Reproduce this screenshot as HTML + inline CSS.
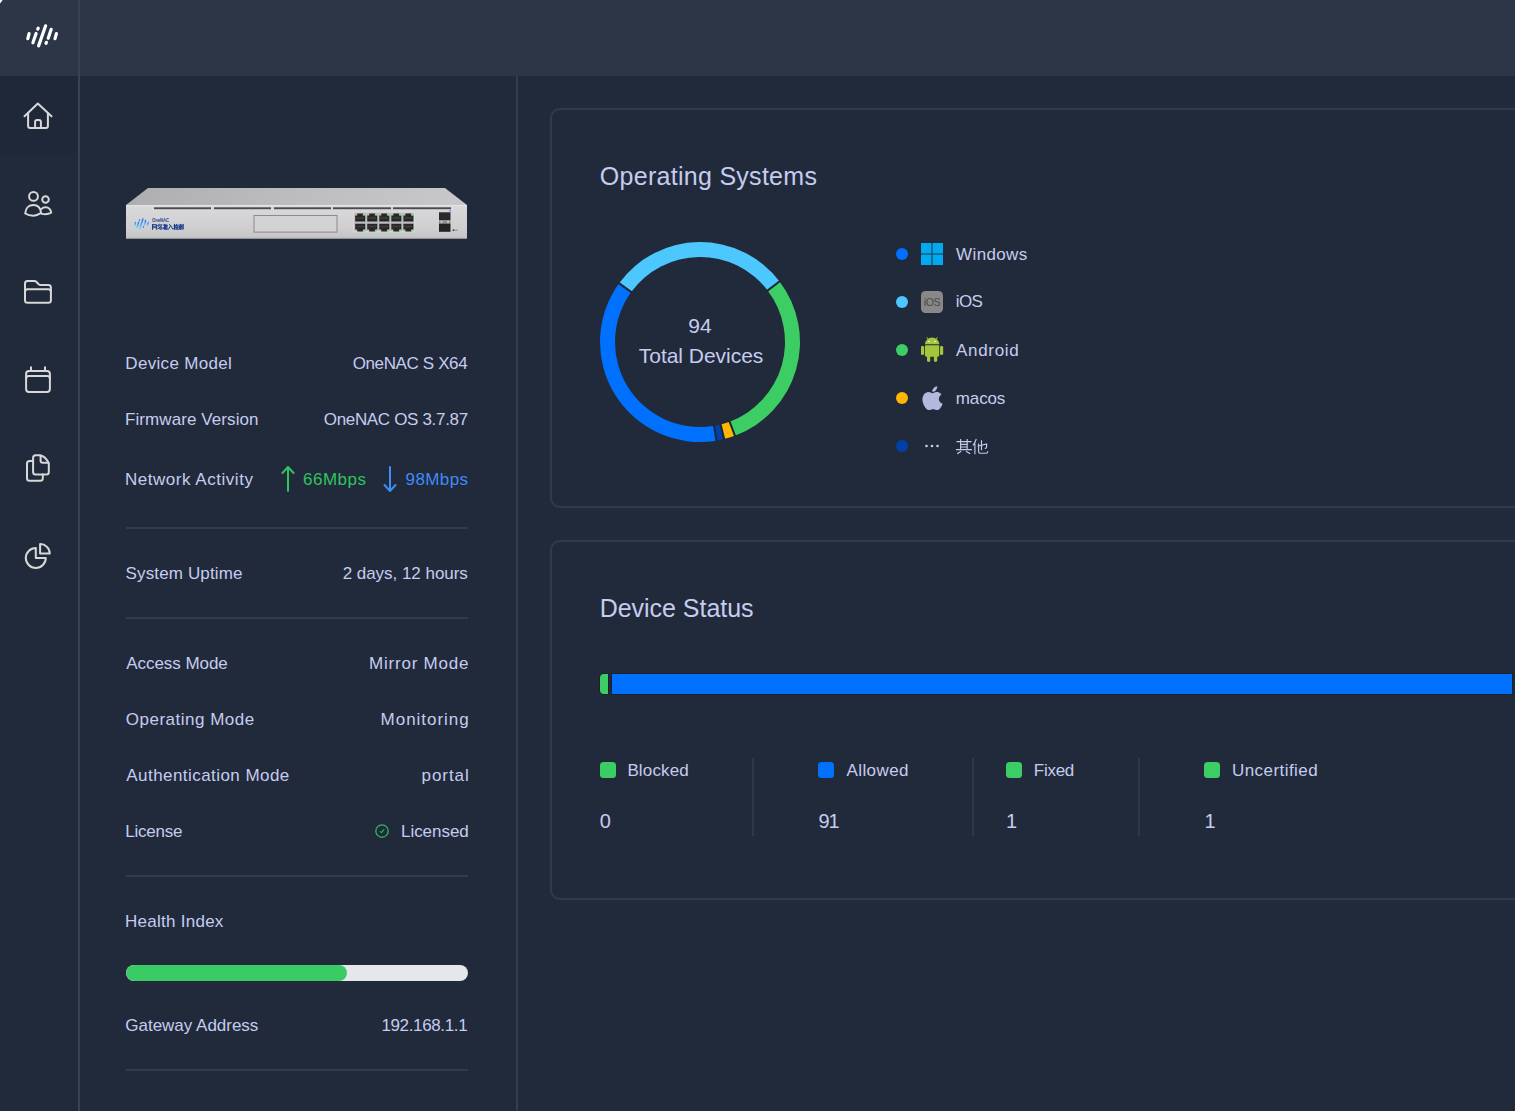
<!DOCTYPE html>
<html>
<head>
<meta charset="utf-8">
<style>
*{margin:0;padding:0;box-sizing:border-box}
html,body{width:1515px;height:1111px;overflow:hidden;background:#212a3b;font-family:"Liberation Sans",sans-serif;color:#c6ccee}
.abs{position:absolute}
.t{position:absolute;line-height:1;white-space:nowrap;font-size:17px}
.r{text-align:right}
#topbar{position:absolute;left:0;top:0;width:1515px;height:76px;background:#2d3647}
#sideline{position:absolute;left:78px;top:0;width:2px;height:1111px;background:#394152}
#panelline{position:absolute;left:516px;top:76px;width:2px;height:1035px;background:#343c4e}
.hr{position:absolute;left:126px;width:342px;height:2px;background:#343a4b}
.card{position:absolute;left:550px;width:1100px;border:2px solid #313a4a;border-radius:10px}
.ic{position:absolute;left:18px;width:40px;height:40px}
.ic path,.ic circle{fill:none;stroke:#d8d8d8;stroke-width:2;stroke-linecap:round;stroke-linejoin:round}
</style>
</head>
<body>
<div id="topbar"></div>
<div class="abs" style="left:0;top:76px;width:78px;height:79px;background:#1f2838;border-radius:0 0 8px 8px"></div>
<div id="sideline"></div>
<svg class="abs" style="left:0;top:0" width="6" height="6" viewBox="0 0 6 6"><path d="M0 0 H3.2 L0 4.3 Z" fill="#f4f4f4"/><path d="M3.2 0 L0 4.3" stroke="#1c2331" stroke-width="0.8"/></svg>
<div id="panelline"></div>

<!-- logo -->
<svg class="abs" style="left:22px;top:20px" width="40" height="32" viewBox="0 0 40 32">
<g stroke="#fff" stroke-width="3.2" stroke-linecap="round" fill="none">
<path d="M7.1 13.6 L5.8 18.6"/>
<path d="M14.1 13.4 L10.9 22.8"/>
<path d="M16.2 8.2 L15.8 9.2"/>
<path d="M23.6 5.8 L16.6 25.9"/>
<path d="M29.2 9.3 L26.2 18.3"/>
<path d="M24.4 22.3 L24 23.3"/>
<path d="M34.4 13.6 L33 18.6"/>
</g>
</svg>

<!-- sidebar icons -->
<svg class="ic" style="top:96px" viewBox="0 0 40 40">
<path d="M6.5 20.2 L19.8 7.6 L33.5 20.2"/>
<path d="M10.1 17.3 V30 Q10.1 32 12.1 32 H27.9 Q29.9 32 29.9 30 V17.3"/>
<path d="M17.1 32 V25.9 Q17.1 23.9 19.1 23.9 H20.9 Q22.9 23.9 22.9 25.9 V32"/>
</svg>
<svg class="ic" style="top:184px" viewBox="0 0 40 40">
<circle cx="15.5" cy="12.4" r="4.4"/>
<circle cx="27.5" cy="15.5" r="3.3"/>
<path d="M7.2 29.5 C7.5 24 11 21.1 15.5 21.1 C20 21.1 22.5 24 23 28.8 C20 30.8 18 31.7 15.5 31.7 C12.5 31.7 9.5 31 7.2 29.5 Z"/>
<path d="M23.5 25 C24.5 23.7 26 23.2 27.7 23.2 C30.5 23.2 32.8 25.5 33.2 28.6 C31.5 29.6 29.5 30.2 27.4 30.2 C25.8 30.2 24.5 30 23.2 29.6"/>
</svg>
<svg class="ic" style="top:272px" viewBox="0 0 40 40">
<path d="M7 11.5 Q7 9 9.5 9 H16.5 Q17.5 9 18.3 9.8 L20.7 12.2 Q21.5 13 22.5 13 H30.4 Q32.9 13 32.9 15.5 V28.3 Q32.9 30.8 30.4 30.8 H9.5 Q7 30.8 7 28.3 Z"/>
<path d="M7 19.8 Q7 17.3 9.5 17.3 H30.4 Q32.9 17.3 32.9 19.8"/>
</svg>
<svg class="ic" style="top:360px" viewBox="0 0 40 40">
<path d="M8.1 14 Q8.1 11 11.1 11 H28.9 Q31.9 11 31.9 14 V28.9 Q31.9 31.9 28.9 31.9 H11.1 Q8.1 31.9 8.1 28.9 Z"/>
<path d="M8.1 18.5 Q8.1 16 10.6 16 H29.4 Q31.9 16 31.9 18.5"/>
<path d="M13 7.3 V10.5 M27 7.3 V10.5"/>
</svg>
<svg class="ic" style="top:448px" viewBox="0 0 40 40">
<path d="M15.1 9.7 Q15.1 7.2 17.6 7.2 H21.5 Q27.5 7.8 30.8 15.5 V24.1 Q30.8 26.6 28.3 26.6 H17.6 Q15.1 26.6 15.1 24.1 Z"/>
<path d="M22.6 7.6 V12.6 Q22.6 14.8 24.8 14.8 H30.4"/>
<path d="M15.1 13 H11.5 Q9 13 9 15.5 V30.3 Q9 32.8 11.5 32.8 H22.3 Q24.8 32.8 24.8 30.3 V26.6"/>
</svg>
<svg class="ic" style="top:536px" viewBox="0 0 40 40">
<path d="M17.8 12 V22 H27.8 A10 10 0 1 1 17.8 12 Z"/>
<path d="M22.1 8.1 V17.6 H31.8 A9.6 9.6 0 0 0 22.1 8.1 Z"/>
</svg>

<svg class="abs" style="left:120px;top:180px" width="360" height="70" viewBox="0 0 360 70">
<defs>
<linearGradient id="gt" x1="0" y1="0" x2="1" y2="0"><stop offset="0" stop-color="#aeaeb0"/><stop offset="0.5" stop-color="#bdbdbf"/><stop offset="1" stop-color="#c8c8ca"/></linearGradient>
<linearGradient id="gf" x1="0" y1="0" x2="0" y2="1"><stop offset="0" stop-color="#dadadc"/><stop offset="0.7" stop-color="#cfcfd1"/><stop offset="1" stop-color="#c4c4c6"/></linearGradient>
<linearGradient id="lg" x1="0" y1="0" x2="1" y2="0"><stop offset="0" stop-color="#6fd0ff"/><stop offset="1" stop-color="#2a78ea"/></linearGradient>
</defs>
<polygon points="28,8 325,8 347,25 6,25" fill="url(#gt)"/>
<rect x="6" y="25" width="341" height="33.5" fill="url(#gf)"/>
<rect x="6" y="25" width="341" height="1" fill="#e4e4e6"/>
<rect x="6" y="57.8" width="341" height="0.9" fill="#a6a6a8"/>
<rect x="34" y="27.3" width="57" height="1.9" fill="#4c4a4c"/><rect x="94" y="27.3" width="57" height="1.9" fill="#4c4a4c"/><rect x="154" y="27.3" width="57" height="1.9" fill="#4c4a4c"/><rect x="213" y="27.3" width="58" height="1.9" fill="#4c4a4c"/><rect x="273" y="27.3" width="58" height="1.9" fill="#4c4a4c"/>
<rect x="134" y="35.5" width="83" height="16.6" fill="#d2d2d4" stroke="#8f7f87" stroke-width="0.9"/>
<rect x="233.6" y="32.2" width="61" height="19.6" fill="#bdbdbf" stroke="#e2e2e4" stroke-width="0.7"/>
<path d="M235.20 35.60 H237.20 V33.60 H243.20 V35.60 H245.20 V41.40 H235.20 Z" fill="#262628"/><rect x="236.40" y="36.80" width="7.60" height="2.2" fill="#4a3e34" opacity="0.7"/><rect x="242.80" y="33.80" width="2.4" height="1.5" fill="#6ef07a"/><path d="M247.25 35.60 H249.25 V33.60 H255.25 V35.60 H257.25 V41.40 H247.25 Z" fill="#262628"/><rect x="248.45" y="36.80" width="7.60" height="2.2" fill="#4a3e34" opacity="0.7"/><rect x="254.85" y="33.80" width="2.4" height="1.5" fill="#6ef07a"/><path d="M259.30 35.60 H261.30 V33.60 H267.30 V35.60 H269.30 V41.40 H259.30 Z" fill="#262628"/><rect x="260.50" y="36.80" width="7.60" height="2.2" fill="#4a3e34" opacity="0.7"/><rect x="266.90" y="33.80" width="2.4" height="1.5" fill="#6ef07a"/><path d="M271.35 35.60 H273.35 V33.60 H279.35 V35.60 H281.35 V41.40 H271.35 Z" fill="#262628"/><rect x="272.55" y="36.80" width="7.60" height="2.2" fill="#4a3e34" opacity="0.7"/><rect x="278.95" y="33.80" width="2.4" height="1.5" fill="#6ef07a"/><path d="M283.40 35.60 H285.40 V33.60 H291.40 V35.60 H293.40 V41.40 H283.40 Z" fill="#262628"/><rect x="284.60" y="36.80" width="7.60" height="2.2" fill="#4a3e34" opacity="0.7"/><rect x="291.00" y="33.80" width="2.4" height="1.5" fill="#6ef07a"/><path d="M235.20 43.80 H245.20 V49.60 H243.20 V51.60 H237.20 V49.60 H235.20 Z" fill="#262628"/><rect x="236.40" y="45.40" width="7.60" height="2.2" fill="#4a3e34" opacity="0.7"/><rect x="242.80" y="49.90" width="2.4" height="1.5" fill="#6ef07a"/><path d="M247.25 43.80 H257.25 V49.60 H255.25 V51.60 H249.25 V49.60 H247.25 Z" fill="#262628"/><rect x="248.45" y="45.40" width="7.60" height="2.2" fill="#4a3e34" opacity="0.7"/><rect x="254.85" y="49.90" width="2.4" height="1.5" fill="#6ef07a"/><path d="M259.30 43.80 H269.30 V49.60 H267.30 V51.60 H261.30 V49.60 H259.30 Z" fill="#262628"/><rect x="260.50" y="45.40" width="7.60" height="2.2" fill="#4a3e34" opacity="0.7"/><rect x="266.90" y="49.90" width="2.4" height="1.5" fill="#6ef07a"/><path d="M271.35 43.80 H281.35 V49.60 H279.35 V51.60 H273.35 V49.60 H271.35 Z" fill="#262628"/><rect x="272.55" y="45.40" width="7.60" height="2.2" fill="#4a3e34" opacity="0.7"/><rect x="278.95" y="49.90" width="2.4" height="1.5" fill="#6ef07a"/><path d="M283.40 43.80 H293.40 V49.60 H291.40 V51.60 H285.40 V49.60 H283.40 Z" fill="#262628"/><rect x="284.60" y="45.40" width="7.60" height="2.2" fill="#4a3e34" opacity="0.7"/><rect x="291.00" y="49.90" width="2.4" height="1.5" fill="#6ef07a"/>
<rect x="319" y="32.3" width="11.5" height="8" fill="#2a2a2c"/>
<rect x="319" y="40.3" width="11.5" height="3.3" fill="#8d8d90"/>
<rect x="320.5" y="41.2" width="2" height="1.4" fill="#e0e0e0"/><rect x="327" y="41.2" width="2" height="1.4" fill="#e0e0e0"/>
<rect x="319" y="43.6" width="11.5" height="8.2" fill="#232325"/>
<rect x="329" y="30.2" width="2.2" height="1.2" fill="#5b8ff0"/>
<g transform="translate(11.8,36.2) scale(0.47)" stroke="url(#lg)" stroke-width="3.3" stroke-linecap="round" fill="none">
<path d="M7.1 13.6 L5.8 18.6"/><path d="M14.1 13.4 L10.9 22.8"/><path d="M16.2 8.2 L15.8 9.2"/><path d="M23.6 5.8 L16.6 25.9"/><path d="M29.2 9.3 L26.2 18.3"/><path d="M24.4 22.3 L24 23.3"/><path d="M34.4 13.6 L33 18.6"/>
</g>
<text x="32" y="42" font-family="Liberation Sans" font-size="5" font-weight="bold" fill="#2a4a92" textLength="17" lengthAdjust="spacingAndGlyphs">OneNAC</text>
<g stroke="#1d3b86" stroke-width="1" fill="none" stroke-linecap="square"><path transform="translate(32.20,44.1)" d="M0.3 0.6 H4.4 V5 M0.3 0.6 V5.2 M1.2 2 L3.4 3.8 M3.4 2 L1.2 3.8"/><path transform="translate(37.55,44.1)" d="M0.2 1.2 L1.6 0.3 M0.6 2.2 L1.8 1.6 M0.3 4.6 L1.9 3.8 M2.4 0.8 H4.4 L2.6 2.6 M2.8 3 H4.3 V5 H2.8 Z"/><path transform="translate(42.90,44.1)" d="M0.4 0.6 L1 1.4 M0.3 4.6 L1.2 2.8 M1.8 0.4 V5.1 M1.8 1.2 H4.5 M1.8 2.6 H4.2 M1.8 3.9 H4.2 M1.8 5 H4.6 M3 0.3 V5"/><path transform="translate(48.25,44.1)" d="M1.2 0.4 L2 1.2 M2.4 1.3 L0.3 5.1 M2.4 1.6 L4.6 5.1"/><path transform="translate(53.60,44.1)" d="M0.9 0.3 V5.2 M0.2 1.8 H1.8 M0.2 4.2 L1.8 3.2 M2.2 1.2 H4.6 M3.1 0.3 V1.2 M2.5 2.4 L2.2 3 M4.1 2.4 L4.5 3 M2.3 3.6 H4.5 M3.4 3.6 V5 M2.1 5 H4.7"/><path transform="translate(58.95,44.1)" d="M0.3 1 H2.6 M1.4 0.3 V5.2 M0.3 2.4 H2.6 M0.5 3.6 V5 M2.3 3.6 V5 M3.2 0.8 V4 M4.3 0.4 V5.2 Q4.3 5.3 3.8 5.1"/></g>
<circle cx="333.5" cy="50.2" r="0.9" fill="#333"/><rect x="334.5" y="49.7" width="3.5" height="0.9" fill="#888"/>
</svg>

<!-- left panel -->
<svg class="abs" style="left:280px;top:464px" width="120" height="30" viewBox="0 0 120 30">
<g fill="none" stroke-width="2" stroke-linecap="round" stroke-linejoin="round">
<path d="M8 3 V27 M2.5 9 L8 3 L13.5 9" stroke="#2fc45d"/>
<path d="M110 3 V27 M104.5 21 L110 27 L115.5 21" stroke="#3f8cf5" transform="translate(-0,0)"/>
</g>
</svg>
<div class="hr" style="top:527px"></div>
<div class="hr" style="top:617px"></div>
<svg class="abs" style="left:372px;top:821px" width="20" height="20" viewBox="0 0 20 20">
<circle cx="10" cy="10" r="6.2" fill="none" stroke="#2db55a" stroke-width="1.35"/>
<path d="M8.3 10.6 L9.4 11.7 L11.9 8.6" fill="none" stroke="#2db55a" stroke-width="1.1" stroke-linecap="round" stroke-linejoin="round"/>
</svg>
<div class="hr" style="top:875px"></div>
<div class="abs" style="left:126px;top:965px;width:342px;height:16px;border-radius:8px;background:#e6e7eb;overflow:hidden"><div style="width:221px;height:16px;border-radius:8px;background:#3bcb64"></div></div>
<div class="hr" style="top:1069px"></div>

<!-- cards -->
<div class="card" style="top:108px;height:400px"></div>
<div class="card" style="top:540px;height:360px"></div>

<svg class="abs" style="left:590px;top:232px" width="220" height="220" viewBox="590 232 220 220"><path d="M716.50 440.63 A100 100 0 0 1 619.10 283.22 L631.23 292.04 A85 85 0 0 0 714.03 425.83 Z" fill="#0070ff"/><path d="M619.10 283.22 A100 100 0 0 1 779.55 281.40 L767.62 290.49 A85 85 0 0 0 631.23 292.04 Z" fill="#4cc8ff"/><path d="M779.55 281.40 A100 100 0 0 1 734.86 435.73 L729.63 421.67 A85 85 0 0 0 767.62 290.49 Z" fill="#3ccd64"/><path d="M734.86 435.73 A100 100 0 0 1 724.19 439.03 L720.56 424.48 A85 85 0 0 0 729.63 421.67 Z" fill="#ffb600"/><path d="M724.19 439.03 A100 100 0 0 1 716.50 440.63 L714.03 425.83 A85 85 0 0 0 720.56 424.48 Z" fill="#0040a8"/><path d="M716.67 441.61 L713.86 424.85" stroke="#1d2535" stroke-width="2"/><path d="M618.29 282.63 L632.04 292.63" stroke="#1d2535" stroke-width="2"/><path d="M780.34 280.80 L766.82 291.10" stroke="#1d2535" stroke-width="2"/><path d="M735.21 436.67 L729.28 420.73" stroke="#1d2535" stroke-width="2"/><path d="M724.43 440.00 L720.32 423.50" stroke="#1d2535" stroke-width="2"/></svg>
<div class="abs" style="left:896px;top:248px;width:12px;height:12px;border-radius:6px;background:#0070ff"></div>
<div class="abs" style="left:896px;top:296px;width:12px;height:12px;border-radius:6px;background:#4cc8ff"></div>
<div class="abs" style="left:896px;top:344px;width:12px;height:12px;border-radius:6px;background:#3ccd64"></div>
<div class="abs" style="left:896px;top:392px;width:12px;height:12px;border-radius:6px;background:#ffb600"></div>
<div class="abs" style="left:896px;top:440px;width:12px;height:12px;border-radius:6px;background:#0040a8"></div>
<svg class="abs" style="left:921px;top:243px" width="22" height="22" viewBox="0 0 22 22">
<rect x="0" y="0" width="22" height="22" fill="#03a9f0"/>
<rect x="10.2" y="0" width="1.6" height="22" fill="#16607f"/>
<rect x="0" y="10.2" width="22" height="1.6" fill="#16607f"/>
</svg>
<svg class="abs" style="left:921px;top:291px" width="22" height="22" viewBox="0 0 22 22">
<rect x="0" y="0" width="22" height="22" rx="4.5" fill="#888888"/>
<text x="11" y="14.6" text-anchor="middle" font-family="Liberation Sans" font-size="10.5" fill="#4a4a4a" letter-spacing="-0.3">iOS</text>
</svg>
<svg class="abs" style="left:920px;top:336px" width="24" height="28" viewBox="0 0 24 28">
<g fill="#a4c639">
<path d="M5 8.3 A7.1 6.9 0 0 1 19.2 8.3 Z"/>
<path d="M5 9.2 H19.2 V19.2 Q19.2 20.7 17.7 20.7 H6.5 Q5 20.7 5 19.2 Z"/>
<rect x="1" y="9.8" width="3.2" height="9.3" rx="1.6"/>
<rect x="20" y="9.8" width="3.2" height="9.3" rx="1.6"/>
<rect x="7" y="17" width="3.3" height="9" rx="1.65"/>
<rect x="13.9" y="17" width="3.3" height="9" rx="1.65"/>
</g>
<path d="M6.6 1 L8.3 3.3 M17.6 1 L15.9 3.3" stroke="#a4c639" stroke-width="0.8"/>
<ellipse cx="9.1" cy="5.4" rx="1.1" ry="0.75" fill="#e9f1cf"/>
<ellipse cx="15.1" cy="5.4" rx="1.1" ry="0.75" fill="#e9f1cf"/>
</svg>
<svg class="abs" style="left:921.5px;top:385.8px" width="21" height="24.5" viewBox="1.8 1.6 17.2 20.9" preserveAspectRatio="none">
<path fill="#b3b9de" d="M15.6 12.7 C15.6 10.1 17.7 8.9 17.8 8.8 C16.6 7.1 14.8 6.8 14.1 6.8 C12.6 6.6 11.2 7.7 10.4 7.7 C9.6 7.7 8.5 6.8 7.2 6.8 C5.5 6.9 3.9 7.9 3 9.4 C1.2 12.5 2.5 17.1 4.3 19.7 C5.2 20.9 6.2 22.3 7.5 22.3 C8.8 22.2 9.3 21.4 10.9 21.4 C12.4 21.4 12.9 22.3 14.2 22.2 C15.6 22.2 16.5 20.9 17.3 19.7 C18.3 18.3 18.7 16.9 18.7 16.8 C18.7 16.8 15.6 15.6 15.6 12.7 Z M13.2 5.2 C13.9 4.3 14.4 3.1 14.2 1.9 C13.2 2 12 2.6 11.3 3.5 C10.6 4.2 10 5.5 10.2 6.6 C11.3 6.7 12.5 6 13.2 5.2 Z"/>
</svg>
<svg class="abs" style="left:921px;top:435px" width="22" height="22" viewBox="0 0 22 22">
<g fill="#c6ccee"><circle cx="5.5" cy="11" r="1.3"/><circle cx="11" cy="11" r="1.3"/><circle cx="16.5" cy="11" r="1.3"/></g>
</svg>
<svg class="abs" style="left:955px;top:437px" width="34" height="20" viewBox="0 0 34 20">
<g fill="none" stroke="#c6ccee" stroke-width="1.15" stroke-linecap="butt">
<path d="M1.5 4.6 H16.5 M5.6 2 V12.6 M12.2 2 V12.6 M5.6 7.3 H12.2 M5.6 10 H12.2 M1 12.6 H17 M6.2 14.2 L2.2 16.8 M11 14.2 L15.2 16.8"/>
<path d="M21.3 2 Q20.2 5.5 18 8.5 M19.9 6.4 V17.2 M22.6 9.2 L31.6 6.9 Q31.8 10.2 31.2 11 Q30.8 11.5 29.8 11.2 M26.5 3.2 V13.2 M23.6 6.6 V14.8 Q23.6 16.2 25 16.2 H31.2 Q32.6 16.2 32.8 14.2"/>
</g>
</svg>

<div class="abs" style="left:599px;top:673px;width:10px;height:22px;background:#1b2130;border-radius:5px 0 0 5px"></div>
<div class="abs" style="left:600px;top:674px;width:8px;height:20px;background:#3ccd64;border-radius:4px 0 0 4px"></div>
<div class="abs" style="left:611px;top:673px;width:902px;height:22px;background:#1b2130"></div>
<div class="abs" style="left:612px;top:674px;width:900px;height:20px;background:#0070ff"></div>
<div class="abs" style="left:600px;top:762px;width:16px;height:16px;border-radius:3.5px;background:#3ccd64"></div>
<div class="abs" style="left:752px;top:758px;width:2px;height:78px;background:#2f3748"></div>
<div class="abs" style="left:818px;top:762px;width:16px;height:16px;border-radius:3.5px;background:#0070ff"></div>
<div class="abs" style="left:972px;top:758px;width:2px;height:78px;background:#2f3748"></div>
<div class="abs" style="left:1006px;top:762px;width:16px;height:16px;border-radius:3.5px;background:#3ccd64"></div>
<div class="abs" style="left:1138px;top:758px;width:2px;height:78px;background:#2f3748"></div>
<div class="abs" style="left:1204px;top:762px;width:16px;height:16px;border-radius:3.5px;background:#3ccd64"></div>

<div class="t" id="t0" style="left:125.30px;top:354.61px;letter-spacing:0.326px">Device Model</div>
<div class="t" id="t1" style="left:352.68px;top:354.61px;letter-spacing:-0.373px">OneNAC S X64</div>
<div class="t" id="t2" style="left:125.03px;top:410.61px;letter-spacing:0.083px">Firmware Version</div>
<div class="t" id="t3" style="left:323.78px;top:410.61px;letter-spacing:-0.331px">OneNAC OS 3.7.87</div>
<div class="t" id="t4" style="left:125.03px;top:470.61px;letter-spacing:0.527px">Network Activity</div>
<div class="t" id="t5" style="left:303.10px;top:470.61px;color:#2fc45d;letter-spacing:0.475px">66Mbps</div>
<div class="t" id="t6" style="left:405.56px;top:470.61px;color:#3f8cf5;letter-spacing:0.392px">98Mbps</div>
<div class="t" id="t7" style="left:125.58px;top:564.61px;letter-spacing:0.131px">System Uptime</div>
<div class="t" id="t8" style="left:342.66px;top:564.61px;letter-spacing:-0.033px">2 days, 12 hours</div>
<div class="t" id="t9" style="left:126.29px;top:654.61px;letter-spacing:-0.056px">Access Mode</div>
<div class="t" id="t10" style="left:369.03px;top:654.61px;letter-spacing:0.782px">Mirror Mode</div>
<div class="t" id="t11" style="left:125.78px;top:710.61px;letter-spacing:0.498px">Operating Mode</div>
<div class="t" id="t12" style="left:380.58px;top:710.61px;letter-spacing:0.979px">Monitoring</div>
<div class="t" id="t13" style="left:126.29px;top:766.61px;letter-spacing:0.445px">Authentication Mode</div>
<div class="t" id="t14" style="left:421.54px;top:766.61px;letter-spacing:0.927px">portal</div>
<div class="t" id="t15" style="left:125.19px;top:822.61px;letter-spacing:-0.232px">License</div>
<div class="t" id="t16" style="left:401.03px;top:822.61px;letter-spacing:-0.042px">Licensed</div>
<div class="t" id="t17" style="left:124.97px;top:912.61px;letter-spacing:0.268px">Health Index</div>
<div class="t" id="t18" style="left:125.29px;top:1016.61px;letter-spacing:-0.012px">Gateway Address</div>
<div class="t" id="t19" style="left:381.39px;top:1016.61px;letter-spacing:-0.357px">192.168.1.1</div>
<div class="t" id="t20" style="left:599.86px;top:163.94px;font-size:25px;letter-spacing:0.279px">Operating Systems</div>
<div class="t" id="t21" style="left:688.30px;top:315.22px;font-size:21px">94</div>
<div class="t" id="t22" style="left:638.81px;top:344.92px;font-size:21px;letter-spacing:-0.029px">Total Devices</div>
<div class="t" id="t23" style="left:956.07px;top:245.61px;letter-spacing:0.374px">Windows</div>
<div class="t" id="t24" style="left:955.86px;top:293.41px;letter-spacing:-0.737px">iOS</div>
<div class="t" id="t25" style="left:956.04px;top:341.51px;letter-spacing:0.693px">Android</div>
<div class="t" id="t26" style="left:955.84px;top:389.51px;letter-spacing:-0.133px">macos</div>
<div class="t" id="t27" style="left:599.71px;top:595.94px;font-size:25px;letter-spacing:-0.030px">Device Status</div>
<div class="t" id="t28" style="left:627.38px;top:761.71px;letter-spacing:0.156px">Blocked</div>
<div class="t" id="t29" style="left:599.84px;top:810.87px;font-size:20px">0</div>
<div class="t" id="t30" style="left:846.44px;top:761.71px;letter-spacing:0.430px">Allowed</div>
<div class="t" id="t31" style="left:818.39px;top:810.97px;font-size:20px;letter-spacing:-0.993px">91</div>
<div class="t" id="t32" style="left:1033.81px;top:761.71px;letter-spacing:-0.266px">Fixed</div>
<div class="t" id="t33" style="left:1005.88px;top:811.17px;font-size:20px">1</div>
<div class="t" id="t34" style="left:1231.93px;top:761.71px;letter-spacing:0.451px">Uncertified</div>
<div class="t" id="t35" style="left:1204.41px;top:810.77px;font-size:20px">1</div>
</body>
</html>
